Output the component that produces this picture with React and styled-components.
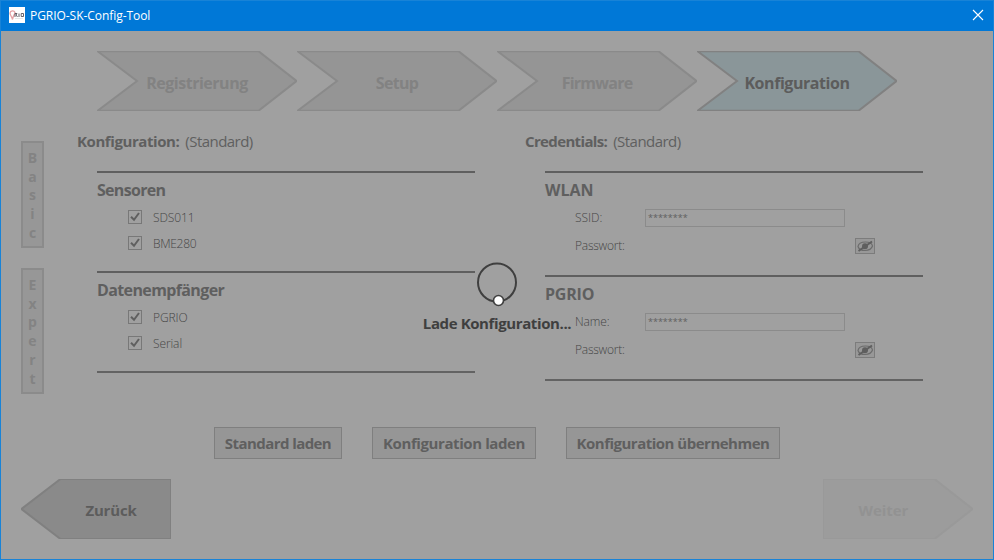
import React from "react";
import styled, { createGlobalStyle } from "styled-components";

const GlobalStyle = createGlobalStyle`
  * { box-sizing: border-box; }
  body { margin: 0; background: #a0a0a0; }
`;

const Window = styled.div`
  position: relative;
  display: flex;
  flex-direction: column;
  width: 994px;
  height: 560px;
  border: 1px solid #1883d7;
  background: #a0a0a0;
  color: #5f5f5f;
  font-family: "Open Sans", "Noto Sans", sans-serif;
  overflow: hidden;
`;

const TitleBar = styled.header`
  display: flex;
  align-items: center;
  flex: none;
  height: 30px;
  padding: 0 9px 2px 8px;
  background: #0078d7;
`;

const AppIcon = styled.svg`
  width: 16px;
  height: 16px;
  margin-right: 5px;
`;

const WindowTitle = styled.span`
  flex: 1;
  padding-top: 2px;
  font-size: 12px;
  line-height: 18px;
  letter-spacing: -0.05px;
  color: #fff;
`;

const CloseIcon = styled.svg`
  width: 12px;
  height: 12px;
`;

const Content = styled.main`
  display: flex;
  flex-direction: column;
  flex: 1;
  padding: 20px;
`;

const Steps = styled.nav`
  display: flex;
  height: 60px;
  margin-left: 76px;
`;

const StepItem = styled.div`
  display: grid;
  width: 200px;
  height: 60px;
  > * { grid-area: 1 / 1; }
`;

const Shape = styled.svg`
  width: 100%;
  height: 60px;
  overflow: hidden;
  fill: ${(p) => p.$fill};
  stroke: ${(p) => p.$stroke};
  stroke-width: 2;
`;

const ShapeLabel = styled.span`
  place-self: center;
  padding: ${(p) => p.$top || 2}px ${(p) => p.$right || 0}px 0 ${(p) => p.$left || 0}px;
  font-size: ${(p) => p.$size || 16}px;
  font-weight: 700;
  line-height: 22px;
  letter-spacing: ${(p) => p.$track}px;
  color: ${(p) => p.$color};
`;

const Workspace = styled.div`
  display: flex;
  height: 296px;
  margin-top: 20px;
`;

const ModeTabs = styled.aside`
  display: flex;
  flex-direction: column;
  gap: 20px;
  width: 23px;
  margin: 10px 33px 0 0;
`;

const ModeTab = styled.div`
  display: flex;
  flex-direction: column;
  align-items: center;
  height: ${(p) => p.$height}px;
  padding-top: 6px;
  border: 2px solid #8b8b8b;
  background: #979797;
  font-size: 14px;
  font-weight: 700;
  line-height: 18.7px;
  color: #838383;
`;

const Column = styled.section`
  width: 398px;
  margin-right: 50px;
`;

const ColumnHeader = styled.div`
  display: flex;
  gap: 6px;
  height: 40px;
  font-size: 15px;
  line-height: 21px;
`;

const ColumnName = styled.strong`
  letter-spacing: ${(p) => p.$track}px;
`;

const Preset = styled.span`
  letter-spacing: -0.54px;
`;

const Group = styled.div`
  height: ${(p) => p.$height}px;
  margin-left: 20px;
  border-top: 2px solid #5f5f5f;
`;

const GroupEnd = styled.div`
  height: 2px;
  margin-left: 20px;
  background: #636363;
`;

const GroupTitle = styled.h2`
  height: 31px;
  margin: 0;
  font-size: 16px;
  line-height: 35px;
  letter-spacing: ${(p) => p.$track}px;
`;

const OptionRow = styled.label`
  display: flex;
  align-items: center;
  gap: 11px;
  height: 26px;
  padding-left: 31px;
`;

const CheckBox = styled.svg`
  width: 14px;
  height: 14px;
  fill: none;
`;

const OptionName = styled.span`
  padding-top: 1px;
  font-size: 12px;
  font-weight: 300;
  line-height: 18px;
  letter-spacing: ${(p) => p.$track || 0}px;
  color: #464646;
`;

const FieldName = styled(OptionName)`
  padding: 0 0 1px;
`;

const FieldRow = styled.div`
  display: grid;
  grid-template-columns: 70px 200px 30px;
  align-items: center;
  height: 28px;
  padding-left: 30px;
`;

const FieldBox = styled.div`
  height: 18px;
  padding-left: 2px;
  border: 1px solid #8b8b8b;
  font-size: 9px;
  line-height: 16px;
`;

const EyeButton = styled.button`
  display: flex;
  grid-column: 3;
  width: 20px;
  height: 16px;
  margin-left: 10px;
  padding: 0;
  border: 1px solid #7c7c7c;
  background: #989898;
`;

const Actions = styled.div`
  display: flex;
  gap: 30px;
  margin-left: 193px;
`;

const ActionButton = styled.button`
  width: ${(p) => p.$width}px;
  height: 32px;
  padding: 0 0 1px;
  border: 1px solid #7f7f7f;
  background: #969696;
  font: 700 15px/22px "Open Sans", "Noto Sans", sans-serif;
  letter-spacing: ${(p) => p.$track}px;
  white-space: nowrap;
  color: #5f5f5f;
`;

const Pager = styled.footer`
  display: flex;
  justify-content: space-between;
  margin-top: 20px;
`;

const PagerItem = styled.div`
  display: grid;
  width: 150px;
  height: 60px;
  > * { grid-area: 1 / 1; }
`;

const Loading = styled.div`
  position: absolute;
  top: 261px;
  left: 396px;
  display: flex;
  flex-direction: column;
  align-items: center;
  width: 200px;
`;

const Spinner = styled.svg`
  width: 42px;
  height: 46px;
`;

const LoadingText = styled.span`
  margin-top: 4px;
  font-size: 15px;
  font-weight: 700;
  line-height: 22px;
  letter-spacing: -0.39px;
  color: #3f3f3f;
`;

const steps = [
  { name: "Registrierung", track: -0.48 },
  { name: "Setup", track: -0.68 },
  { name: "Firmware", track: -0.75 },
  { name: "Konfiguration", track: -0.44, active: true },
];

function Step({ name, track, active }) {
  return (
    <StepItem>
      <Shape viewBox="0 0 200 60" $fill={active ? "#8a9699" : "#959595"} $stroke={active ? "#818181" : "#8a8a8a"}>
        <path d="M0.5 0.2H161.5L199.5 30L161.5 59.8H0.5L40 30Z" />
      </Shape>
      <ShapeLabel $top={4} $track={track} $color={active ? "#5c5c5c" : "#828282"}>{name}</ShapeLabel>
    </StepItem>
  );
}

function Option({ name, track }) {
  return (
    <OptionRow>
      <CheckBox viewBox="0 0 14 14">
        <rect x="0.5" y="0.5" width="13" height="13" stroke="#787878" />
        <path d="M3 6.8L6 9.8L11 3" stroke="#5f5f5f" strokeWidth="2" />
      </CheckBox>
      <OptionName $track={track}>{name}</OptionName>
    </OptionRow>
  );
}

function Field({ name, track, value }) {
  return (
    <FieldRow>
      <FieldName $track={track}>{name}</FieldName>
      {value ? (
        <FieldBox>{value}</FieldBox>
      ) : (
        <EyeButton aria-label="Passwort anzeigen">
          <svg width="18" height="14" viewBox="0 0 18 14" fill="none" stroke="#5f5f5f">
            <path d="M2 7.5C2.5 4.5 6 3 9.5 3S16 4.5 16.5 7C15.5 10 12.5 11.5 9 11.5S3 10.5 2 7.5Z" stroke="#6c6c6c" strokeWidth="1.2" />
            <circle cx="9" cy="7.2" r="3" fill="#5f5f5f" stroke="none" />
            <path d="M2.5 12L16 2.5" strokeWidth="2" />
          </svg>
        </EyeButton>
      )}
    </FieldRow>
  );
}

export default function App() {
  return (
    <Window>
      <GlobalStyle />
      <TitleBar>
        <AppIcon viewBox="0 0 16 16" fill="none">
          <path d="M0 0H16V16H0Z" fill="#fff" />
          <path d="M3.5 12.5C3 10 1 8 1 6A2.6 2.6 0 0 1 6 5.5C6 7.5 4 8.5 3.5 12.5Z" stroke="#e5a0a4" strokeWidth="1.3" />
          <path d="M6 10V6.5H8L7 8L8.5 10M10 6.5V10M12.2 6.5H14.5V9.5H12.2Z" stroke="#55505a" strokeWidth="0.9" />
          <path d="M6 11.5H14" stroke="#ddd" strokeWidth="0.7" />
        </AppIcon>
        <WindowTitle>PGRIO-SK-Config-Tool</WindowTitle>
        <CloseIcon viewBox="0 0 12 12" fill="none" stroke="#fff" strokeWidth="1.1">
          <path d="M1 1L11 11M11 1L1 11" />
        </CloseIcon>
      </TitleBar>

      <Content>
        <Steps>
          {steps.map((s) => <Step key={s.name} {...s} />)}
        </Steps>

        <Workspace>
          <ModeTabs>
            <ModeTab $height={107}>
              {"Basic".split("").map((c) => <span key={c}>{c}</span>)}
            </ModeTab>
            <ModeTab $height={126}>
              {"Expert".split("").map((c) => <span key={c}>{c}</span>)}
            </ModeTab>
          </ModeTabs>
          <Column>
            <ColumnHeader>
              <ColumnName $track={-0.42}>Konfiguration:</ColumnName>
              <Preset>(Standard)</Preset>
            </ColumnHeader>
            <Group $height={100}>
              <GroupTitle $track={-0.7}>Sensoren</GroupTitle>
              <Option name="SDS011" track={-0.1} />
              <Option name="BME280" track={-0.3} />
            </Group>
            <Group $height={100}>
              <GroupTitle $track={-0.62}>Datenempfänger</GroupTitle>
              <Option name="PGRIO" track={-0.1} />
              <Option name="Serial" track={-0.1} />
            </Group>
            <GroupEnd />
          </Column>
          <Column>
            <ColumnHeader>
              <ColumnName $track={-0.64}>Credentials:</ColumnName>
              <Preset>(Standard)</Preset>
            </ColumnHeader>
            <Group $height={104}>
              <GroupTitle $track={0}>WLAN</GroupTitle>
              <Field name="SSID:" value="********" />
              <Field name="Passwort:" track={-0.25} />
            </Group>
            <Group $height={104}>
              <GroupTitle $track={-0.2}>PGRIO</GroupTitle>
              <Field name="Name:" track={-0.1} value="********" />
              <Field name="Passwort:" track={-0.25} />
            </Group>
            <GroupEnd />
          </Column>
        </Workspace>

        <Actions>
          <ActionButton $width={128} $track={-0.57}>Standard laden</ActionButton>
          <ActionButton $width={164} $track={-0.41}>Konfiguration laden</ActionButton>
          <ActionButton $width={214} $track={-0.5}>Konfiguration übernehmen</ActionButton>
        </Actions>

        <Pager>
          <PagerItem>
            <Shape viewBox="0 0 150 60" $fill="#8a8a8a" $stroke="#808080">
              <path d="M39.5 0H150V60H39.5L0.5 30Z" />
            </Shape>
            <ShapeLabel $size={15} $left={30} $track={-0.19} $color="#5c5c5c">Zurück</ShapeLabel>
          </PagerItem>
          <PagerItem>
            <Shape viewBox="0 0 150 60" $fill="#9c9c9c" $stroke="#999999">
              <path d="M0 0H111.5L149.5 30L111.5 60H0Z" />
            </Shape>
            <ShapeLabel $size={15} $right={29} $track={-0.06} $color="#929292">Weiter</ShapeLabel>
          </PagerItem>
        </Pager>
      </Content>

      <Loading>
        <Spinner viewBox="0 0 42 46" fill="none" stroke="#3f3f3f">
          <circle cx="21" cy="20.5" r="19" strokeWidth="2" />
          <circle cx="22.5" cy="38.5" r="5" fill="#fff" strokeWidth="1.6" />
        </Spinner>
        <LoadingText>Lade Konfiguration...</LoadingText>
      </Loading>
    </Window>
  );
}
